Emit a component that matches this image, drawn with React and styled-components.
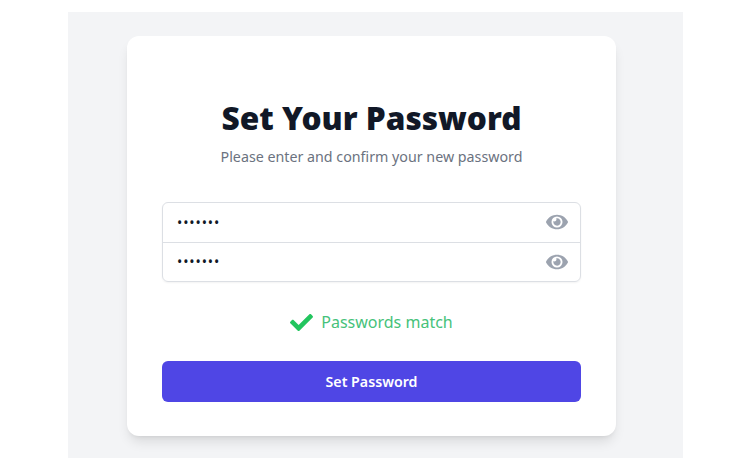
import React from "react";
import styled, { createGlobalStyle } from "styled-components";
import { FaEye, FaCheck } from "react-icons/fa";

const GlobalStyle = createGlobalStyle`
    body {
        margin: 0;
        background-color: white;
        font-family: "Noto Sans", "Open Sans", sans-serif;
    }
`;

const Page = styled.div`
    height: 469px;
    padding-top: 12px;
    box-sizing: border-box;
    display: flex;
    justify-content: center;
`;

const Backdrop = styled.div`
    width: 615px;
    height: 446px;
    margin-left: 1px;
    background-color: #f3f4f6;
    display: flex;
    align-items: center;
    justify-content: center;
`;

const Card = styled.form`
    width: 489px;
    height: 400px;
    margin: 2px 8px 0 0;
    box-sizing: border-box;
    padding: 65px 35px 34px;
    background-color: white;
    border-radius: 12px;
    box-shadow: 0 8px 12px -2px rgba(0, 0, 0, 0.1), 0 3px 5px -3px rgba(0, 0, 0, 0.1);
    display: flex;
    flex-direction: column;
`;

const Title = styled.h1`
    margin: 0;
    font-size: 31.6px;
    line-height: 34px;
    font-weight: 900;
    color: #111827;
    text-align: center;
`;

const Subtitle = styled.p`
    margin: 12px 0 0;
    font-size: 14.25px;
    line-height: 20px;
    color: #6b7280;
    text-align: center;
`;

const Fields = styled.div`
    margin-top: 35px;
    border: 1px solid #dcdfe4;
    border-radius: 6px;
    box-shadow: 0 1px 2px rgba(0, 0, 0, 0.05);
    overflow: hidden;
`;

const Field = styled.div`
    height: 38.5px;
    padding: 0 12px 0 14px;
    display: flex;
    align-items: center;
    justify-content: space-between;
    & + & {
        border-top: 1px solid #dcdfe4;
    }
`;

const Input = styled.input`
    flex: 1;
    min-width: 0;
    border: none;
    outline: none;
    padding: 0;
    font-family: inherit;
    font-size: 14px;
    letter-spacing: 0.9px;
    color: #111827;
    background: transparent;
`;

const EyeButton = styled.span`
    display: flex;
    font-size: 22px;
    color: #9ca3af;
`;

const Match = styled.div`
    margin-top: 28px;
    height: 24px;
    display: flex;
    align-items: center;
    justify-content: center;
    gap: 8px;
    font-size: 16px;
    color: #46c27a;
    svg {
        font-size: 23px;
        color: #22c55e;
    }
`;

const Submit = styled.button`
    margin-top: auto;
    height: 41px;
    border: none;
    border-radius: 6px;
    background-color: #4f46e5;
    color: white;
    font-family: inherit;
    font-size: 14.2px;
    font-weight: 600;
`;

const PasswordRow = () => (
    <Field>
        <Input type="password" defaultValue="1234567" readOnly />
        <EyeButton>
            <FaEye />
        </EyeButton>
    </Field>
);

const App = () => {
    return (
        <Page>
            <GlobalStyle />
            <Backdrop>
                <Card onSubmit={e => e.preventDefault()}>
                    <Title>Set Your Password</Title>
                    <Subtitle>Please enter and confirm your new password</Subtitle>
                    <Fields>
                        <PasswordRow />
                        <PasswordRow />
                    </Fields>
                    <Match>
                        <FaCheck />
                        Passwords match
                    </Match>
                    <Submit type="submit">Set Password</Submit>
                </Card>
            </Backdrop>
        </Page>
    );
};

export default App;
